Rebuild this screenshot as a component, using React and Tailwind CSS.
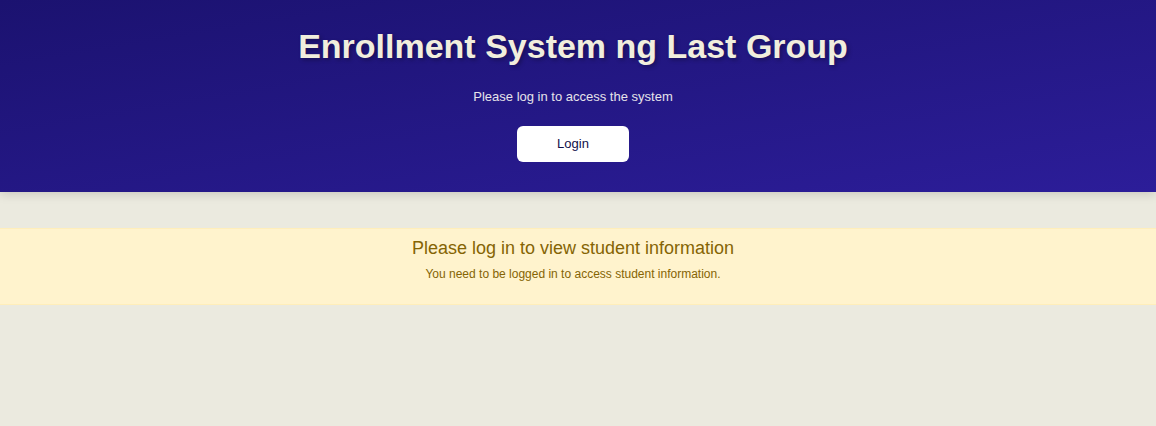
export default function App() {
  return (
    <div className="min-h-[426px] bg-[#ebeadf] font-['Liberation_Sans',Arial,sans-serif]">
      <header className="flex flex-col items-center bg-gradient-to-br from-[#1b1270] to-[#2c1d99] pt-[24px] pr-[10px] pb-[30px] shadow-[0_2px_10px_rgba(0,0,0,0.15)]">
        <h1 className="text-[34px] font-bold leading-[44px] text-[#f1eedd] [text-shadow:2px_2px_4px_rgba(0,0,0,0.3)]">
          Enrollment System ng Last Group
        </h1>
        <p className="mt-[19px] text-[13px] leading-[20px] text-[#e6e3ea]">Please log in to access the system</p>
        <button className="mt-[19px] h-[36px] w-[112px] rounded-md bg-white text-[13px] text-[#12104a]">Login</button>
      </header>
      <div className="mt-[36px] flex flex-col items-center border-y border-[#ffeeba] bg-[#fff3cd] pt-[7px] pr-[10px] pb-[21px] text-[#856404]">
        <h2 className="text-[18px] leading-[24px]">Please log in to view student information</h2>
        <p className="mt-[5px] text-[12px] leading-[18px]">You need to be logged in to access student information.</p>
      </div>
    </div>
  );
}
